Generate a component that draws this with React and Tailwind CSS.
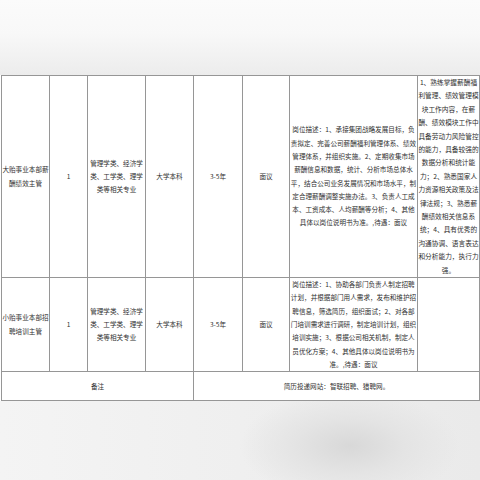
import React from "react";

const cell = "border border-[#969696] p-0 align-middle text-center whitespace-nowrap";

function Lines({ lines }) {
  return (
    <>
      {lines.map((l, i) => (
        <div key={i}>{l}</div>
      ))}
    </>
  );
}

const major = ["管理学类、经济学", "类、工学类、理学", "类等相关专业"];

export default function App() {
  return (
    <div className="w-[480px] h-[480px] flex flex-col overflow-hidden bg-[#efefef] font-['Noto_Sans_CJK_SC','Noto_Sans',sans-serif] text-[6.6px] leading-[13.3px] text-[#303030]">
      <div className="h-[75px] shrink-0 bg-[linear-gradient(180deg,#fbfbfb_0%,#f8f8f8_45%,#ececec_100%)]" />
      <div className="bg-white pl-[1px] pr-[1px]">
        <table className="table-fixed border-collapse w-[478px] bg-white">
          <colgroup>
            <col className="w-[48px]" />
            <col className="w-[38px]" />
            <col className="w-[58px]" />
            <col className="w-[48px]" />
            <col className="w-[49px]" />
            <col className="w-[47px]" />
            <col className="w-[128px]" />
            <col className="w-[62px]" />
          </colgroup>
          <tbody>
            <tr className="h-[202px]">
              <td className={cell}>
                <Lines lines={["大贻事业本部薪", "酬绩效主管"]} />
              </td>
              <td className={cell}>1</td>
              <td className={cell}>
                <Lines lines={major} />
              </td>
              <td className={cell}>大学本科</td>
              <td className={cell}>3-5年</td>
              <td className={cell}>面议</td>
              <td className={cell}>
                <Lines
                  lines={[
                    "岗位描述：1、承接集团战略发展目标，负",
                    "责拟定、完善公司薪酬福利管理体系、绩效",
                    "管理体系，并组织实施。2、定期收集市场",
                    "薪酬信息和数据，统计、分析市场总体水",
                    "平，结合公司业务发展情况和市场水平，制",
                    "定合理薪酬调整实施办法。3、负责人工成",
                    "本、工资成本、人均薪酬等分析；4、其他",
                    "具体以岗位说明书为准。,待遇：面议",
                  ]}
                />
              </td>
              <td className={cell + " text-[6.7px] leading-[13.4px]"}>
                <Lines
                  lines={[
                    "1、熟练掌握薪酬福",
                    "利管理、绩效管理模",
                    "块工作内容，在薪",
                    "酬、绩效模块工作中",
                    "具备劳动力风险管控",
                    "的能力，具备较强的",
                    "数据分析和统计能",
                    "力；2、熟悉国家人",
                    "力资源相关政策及法",
                    "律法规；3、熟悉薪",
                    "酬绩效相关信息系",
                    "统；4、具有优秀的",
                    "沟通协调、语言表达",
                    "和分析能力，执行力",
                    "强。",
                  ]}
                />
              </td>
            </tr>
            <tr className="h-[94px]">
              <td className={cell}>
                <Lines lines={["小贻事业本部招", "聘培训主管"]} />
              </td>
              <td className={cell}>1</td>
              <td className={cell}>
                <Lines lines={major} />
              </td>
              <td className={cell}>大学本科</td>
              <td className={cell}>3-5年</td>
              <td className={cell}>面议</td>
              <td className={cell}>
                <Lines
                  lines={[
                    "岗位描述：1、协助各部门负责人制定招聘",
                    "计划，并根据部门用人需求，发布和维护招",
                    "聘信息，筛选简历，组织面试；2、对各部",
                    "门培训需求进行调研，制定培训计划，组织",
                    "培训实施；3、根据公司相关机制，制定人",
                    "员优化方案；4、其他具体以岗位说明书为",
                    "准。,待遇：面议",
                  ]}
                />
              </td>
              <td className={cell}></td>
            </tr>
            <tr className="h-[29px]">
              <td className={cell} colSpan={4}>
                备注
              </td>
              <td className={cell} colSpan={4}>
                简历投递网站：智联招聘、猎聘网。
              </td>
            </tr>
          </tbody>
        </table>
      </div>
      <div className="flex-1 bg-[radial-gradient(ellipse_110px_55px_at_350px_45px,#d8d8d8_0%,#e4e4e4_50%,rgba(236,236,236,0)_100%),linear-gradient(90deg,#f4f4f4_0%,#efefef_50%,#eaeaea_100%)]" />
    </div>
  );
}
